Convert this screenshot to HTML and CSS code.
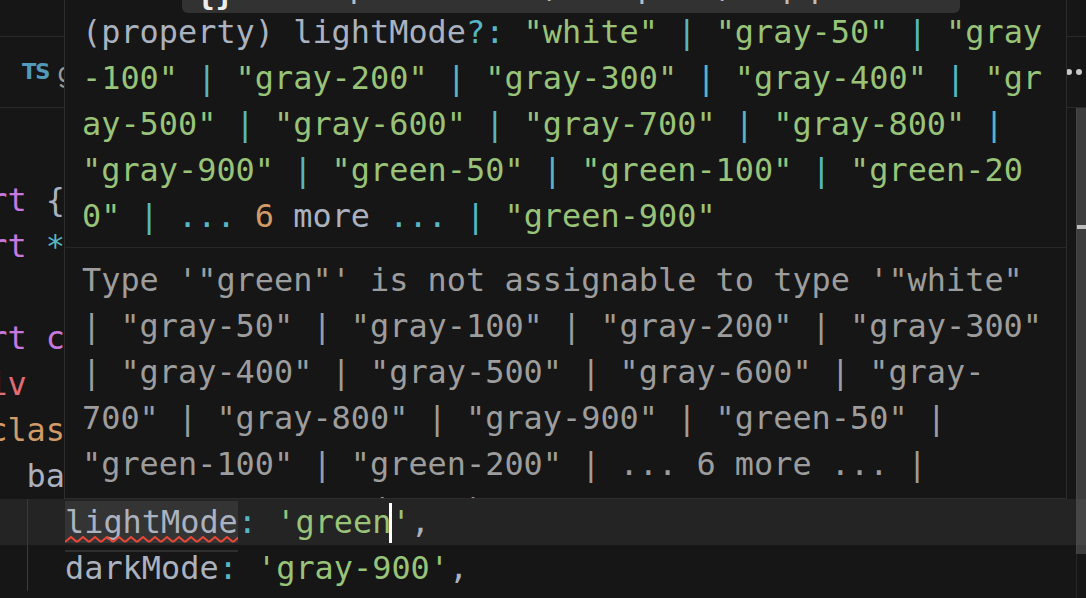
FILE: index.html
```html
<!DOCTYPE html>
<html lang="en">
<head>
  <meta charset="UTF-8">
  <meta name="viewport" content="width=device-width, initial-scale=1.0">
  <link rel="stylesheet" href="styles.css">
</head>
<body>
  <div class="workbench">
    <div class="title-strip"></div>

    <div class="tab-bar">
      <div class="tab">
        <span class="tab-icon">TS</span>
        <span class="tab-name">genericColors.ts</span>
      </div>
      <div class="tab-actions"><span></span><span></span><span></span></div>
    </div>

    <div class="editor">
      <div class="code">
        <div class="line"></div>
        <div class="line"><span class="kw">import</span> { Box } <span class="kw">from</span> <span class="str">'@chakra-ui/react'</span></div>
        <div class="line"><span class="kw">import</span> <span class="op">*</span> <span class="kw">as</span> React <span class="kw">from</span> <span class="str">'react'</span></div>
        <div class="line"></div>
        <div class="line"><span class="kw">export</span> <span class="kw">const</span> <span class="fn">Card</span> <span class="op">=</span> () <span class="op">=&gt;</span> (</div>
        <div class="line">  &lt;<span class="tag">div</span></div>
        <div class="line">    <span class="attr">className</span><span class="op">=</span>{cx(</div>
        <div class="line">      background<span class="op">:</span> {</div>
        <div class="line current guided">        <span class="word">lightMode<svg class="squiggle" width="173" height="7"><defs><pattern id="sq" width="12" height="7" patternUnits="userSpaceOnUse"><path d="M0 6 L6 1 L12 6" fill="none" stroke="#ec4636" stroke-width="2"/></pattern></defs><rect width="173" height="7" fill="url(#sq)"/></svg></span><span class="op">:</span> <span class="str">'green<span class="cursor"></span>'</span>,</div>
        <div class="line guided">        darkMode<span class="op">:</span> <span class="str">'gray-900'</span>,</div>
      </div>

      <div class="overview">
        <div class="slider"></div>
        <div class="cursor-mark"></div>
      </div>
    </div>
  </div>

  <!-- hover with the type signature and the error -->
  <div class="hover">
    <div class="sig">
      <div>(property) lightMode<span class="op">?:</span> <span class="str">"white"</span> <span class="op">|</span> <span class="str">"gray-50"</span> <span class="op">|</span> <span class="str">"gray</span></div>
      <div><span class="str">-100"</span> <span class="op">|</span> <span class="str">"gray-200"</span> <span class="op">|</span> <span class="str">"gray-300"</span> <span class="op">|</span> <span class="str">"gray-400"</span> <span class="op">|</span> <span class="str">"gr</span></div>
      <div><span class="str">ay-500"</span> <span class="op">|</span> <span class="str">"gray-600"</span> <span class="op">|</span> <span class="str">"gray-700"</span> <span class="op">|</span> <span class="str">"gray-800"</span> <span class="op">|</span></div>
      <div><span class="str">"gray-900"</span> <span class="op">|</span> <span class="str">"green-50"</span> <span class="op">|</span> <span class="str">"green-100"</span> <span class="op">|</span> <span class="str">"green-20</span></div>
      <div><span class="str">0"</span> <span class="op">|</span> <span class="op">...</span> <span class="num">6</span> more <span class="op">...</span> <span class="op">|</span> <span class="str">"green-900"</span></div>
    </div>
    <div class="diag">
      <div>Type '"green"' is not assignable to type '"white"</div>
      <div>| "gray-50" | "gray-100" | "gray-200" | "gray-300"</div>
      <div>| "gray-400" | "gray-500" | "gray-600" | "gray-</div>
      <div>700" | "gray-800" | "gray-900" | "green-50" |</div>
      <div>"green-100" | "green-200" | ... 6 more ... |</div>
      <div>"green-900"'.ts(2322)</div>
    </div>
  </div>

  <!-- hover above, mostly scrolled out of view -->
  <div class="hover-top">
    <div class="hover-top-line"><span class="brace">{}</span> Colorpalette an, etcprom, uqep</div>
  </div>
</body>
</html>
```

FILE: styles.css
```css
body {
  margin: 0;
  width: 1086px;
  height: 598px;
  overflow: hidden;
  position: relative;
  background-color: #161616;
  font-family: 'DejaVu Sans Mono', monospace;
}

.workbench {
  display: flex;
  flex-direction: column;
  height: 598px;
}

.title-strip {
  flex: none;
  height: 36px;
  border-bottom: 1px solid #2a2a2a;
}

.tab-bar {
  flex: none;
  height: 70px;
  border-bottom: 1px solid #2a2a2a;
  display: flex;
  align-items: center;
  justify-content: space-between;
}

.tab {
  display: flex;
  align-items: center;
  gap: 8px;
  padding-left: 22px;
}

.tab-icon {
  font-family: 'DejaVu Sans', sans-serif;
  font-weight: bold;
  font-size: 21px;
  letter-spacing: -1px;
  color: #519aba;
}

.tab-name {
  font-family: 'Inter', sans-serif;
  font-size: 26px;
  color: #9a9a9a;
}

.tab-actions {
  display: flex;
  gap: 4px;
  margin-right: -6px;
}

.tab-actions span {
  width: 6px;
  height: 6px;
  border-radius: 50%;
  background-color: #c8c8c8;
}

.editor {
  flex: 1;
  position: relative;
  padding-top: 23px;
  overflow: hidden;
}

/* text is scrolled sideways: column 8 sits at x = 65 */
.code {
  margin-left: calc(65px - 8ch);
  font-size: 31.9px;
  line-height: 46px;
  color: #abb2bf;
}

.line {
  height: 46px;
  white-space: pre;
}

.line.current {
  background-color: #242424;
}

.line.guided {
  background-image: linear-gradient(#3a3a3a, #3a3a3a);
  background-repeat: no-repeat;
  background-size: 1px 100%;
  background-position: 6ch 0;
}

.kw { color: #c678dd; }
.str { color: #98c379; }
.op { color: #56b6c2; }
.num { color: #d19a66; }
.attr { color: #d19a66; }
.tag { color: #e06c75; }
.fn { color: #61afef; }

.word {
  position: relative;
  display: inline-block;
  line-height: 42px;
  background-color: #343434;
}

.word::after {
  content: '';
  position: absolute;
  left: 0;
  right: 0;
  top: 49px;
  height: 2px;
  background-color: #2e2e2e;
}

.squiggle {
  position: absolute;
  left: 0;
  bottom: 0;
}

.cursor {
  display: inline-block;
  width: 3px;
  height: 40px;
  margin: 0 -1px 0 -2px;
  vertical-align: -10px;
  background-color: #ffffff;
}

.overview {
  position: absolute;
  top: 0;
  right: 0;
  bottom: 0;
  width: 10px;
  box-shadow: inset 1px 0 #262626;
}

.slider {
  height: 446px;
  background-color: rgba(121, 121, 121, 0.4);
}

.cursor-mark {
  position: absolute;
  top: 117px;
  left: 1px;
  right: 0;
  height: 4px;
  background-color: #bdbdbd;
}

.hover {
  position: absolute;
  left: 64px;
  top: -10px;
  width: 1003px;
  height: 509px;
  box-sizing: border-box;
  border: 1px solid #2c2c2c;
  background-color: #161616;
  overflow: hidden;
  font-size: 31.9px;
  line-height: 46px;
}

.sig div,
.diag div {
  white-space: pre;
}

.sig {
  padding: 18px 0 8px 17px;
  color: #abb2bf;
}

.diag {
  border-top: 1px solid #262626;
  padding: 9px 0 0 17px;
  color: #9d9d9d;
}

.hover-top {
  position: absolute;
  left: 182px;
  top: -40px;
  width: 778px;
  height: 53px;
  overflow: hidden;
  background-color: #323232;
  border-radius: 0 0 6px 6px;
}

.hover-top-line {
  margin-top: 8px;
  padding-left: 14px;
  font-size: 31.9px;
  line-height: 37px;
  white-space: pre;
  color: #bdbdbd;
}

.brace {
  font-weight: bold;
  color: #ececec;
  vertical-align: -7px;
}
```
